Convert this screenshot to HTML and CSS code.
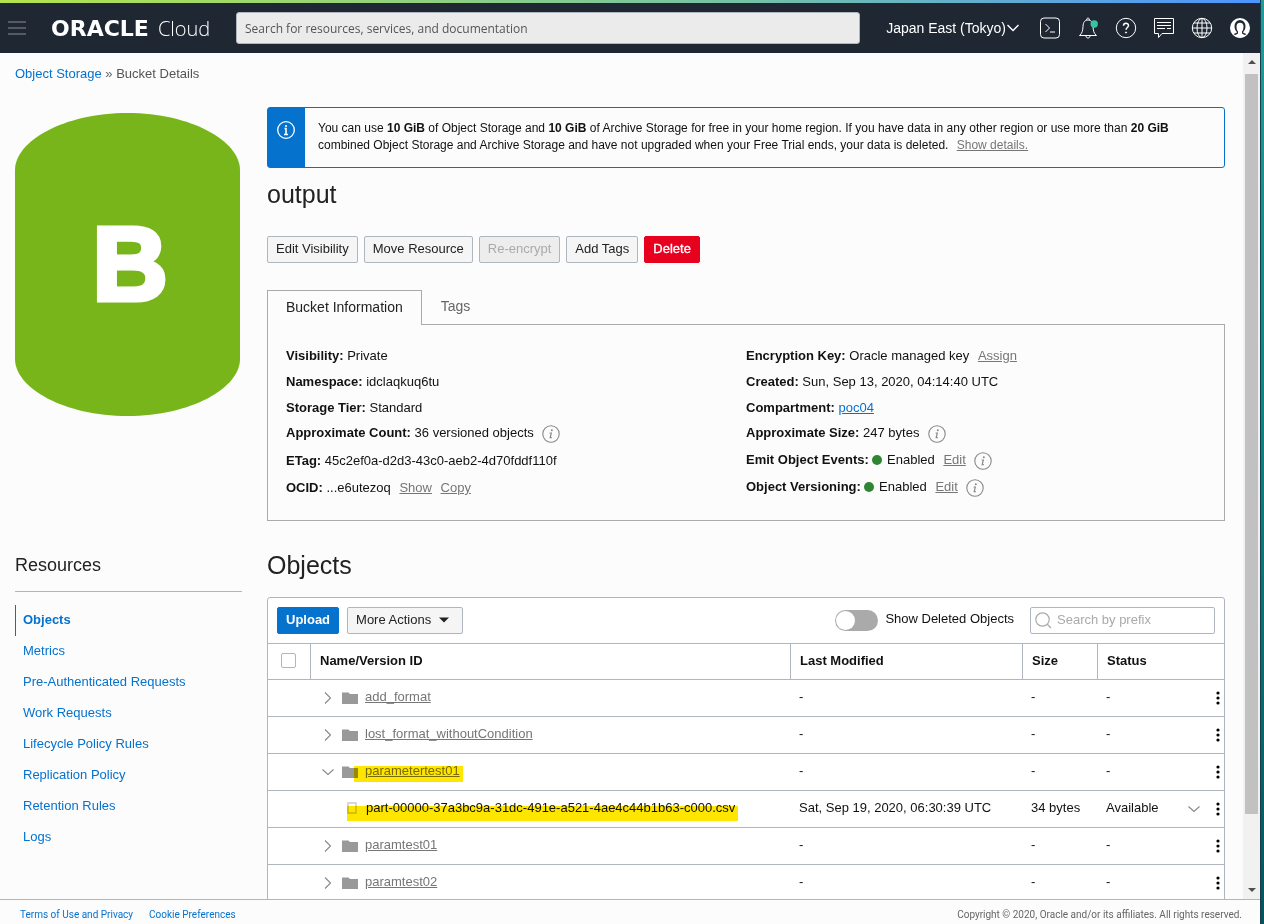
FILE: index.html
```html
<!DOCTYPE html>
<html lang="en">
<head>
    <meta charset="UTF-8">
    <meta name="viewport" content="width=device-width, initial-scale=1">
    <title>Bucket Details</title>
    <link rel="stylesheet" href="styles.css">
</head>
<body>

    <!-- shared icons -->
    <svg class="defs" aria-hidden="true">
        <symbol id="info" viewBox="0 0 18 18">
            <circle cx="9" cy="9" r="8.2" fill="none" stroke="currentColor" stroke-width="1.1"/>
            <circle cx="9.8" cy="5.2" r="1" fill="currentColor"/>
            <path d="M7.6 8h1.7L8.2 12.6h1.6" fill="none" stroke="currentColor" stroke-width="1.2"/>
        </symbol>
        <symbol id="right" viewBox="0 0 12 12">
            <path d="M3 0.5L8.5 6L3 11.5" fill="none" stroke="currentColor" stroke-width="1.1"/>
        </symbol>
        <symbol id="down" viewBox="0 0 12 12">
            <path d="M0.5 3.5L6 8.5L11.5 3.5" fill="none" stroke="currentColor" stroke-width="1.1"/>
        </symbol>
        <symbol id="folder" viewBox="0 0 16 12">
            <path d="M0 0.5h6.5l1.5 1.5h8v10H0z" fill="#999"/>
        </symbol>
        <symbol id="dots" viewBox="0 0 4 14">
            <circle cx="2" cy="2" r="1.6"/>
            <circle cx="2" cy="7" r="1.6"/>
            <circle cx="2" cy="12" r="1.6"/>
        </symbol>
    </svg>

    <div class="window">
        <header class="header">
            <button class="icon-btn menu" aria-label="Menu">
                <svg width="18" height="14" viewBox="0 0 18 14"><path d="M0 1h18M0 7h18M0 13h18" stroke="#8b9096" stroke-width="1.2"/></svg>
            </button>
            <a href="#" class="logo"><span class="logo-name">ORACLE</span><span class="logo-cloud">Cloud</span></a>
            <input type="text" class="search" aria-label="Search" placeholder="Search for resources, services, and documentation">
            <button class="region">Japan East (Tokyo)
                <svg width="12" height="8" viewBox="0 0 12 8"><path d="M0.5 1L6 6.5L11.5 1" fill="none" stroke="#fff" stroke-width="1.4"/></svg>
            </button>
            <div class="tools">
                <button class="icon-btn" aria-label="Cloud Shell">
                    <svg width="22" height="22" viewBox="0 0 22 22" fill="none" stroke="#fff"><rect x="1.5" y="1" width="19" height="20" rx="3.5"/><path d="M6.5 7l4 4-4 4M11 15h5"/></svg>
                </button>
                <button class="icon-btn" aria-label="Notifications">
                    <svg width="22" height="22" viewBox="0 0 22 22" fill="none" stroke="#fff"><path d="M2.5 18.5c3-2.500 3.200-5 3.500-9C6.200 5 8 3 11 3s4.800 2 5 6.500c.3 4 .5 6.500 3.500 9z"/><path d="M9.500 3c0-2.500 3-2.500 3 0M9 19c0 2.700 4 2.700 4 0"/><circle cx="17.200" cy="7" r="3.700" fill="#36c5a4" stroke="none"/></svg>
                </button>
                <button class="icon-btn" aria-label="Help">
                    <svg width="22" height="22" viewBox="0 0 22 22" fill="none" stroke="#fff"><circle cx="11" cy="11" r="9.700"/><path d="M8.500 8.800c0-3.400 5-3.300 5-.3 0 2-2.500 2-2.500 4.300" stroke-width="1.500"/><circle cx="11" cy="15.500" r=".6" fill="#fff"/></svg>
                </button>
                <button class="icon-btn" aria-label="Chat">
                    <svg width="22" height="22" viewBox="0 0 22 22" fill="none" stroke="#fff"><path d="M1.500 1.500h19v15H9l-3.500 4v-4h-4z"/><path d="M4 5.500h14M4 8.500h14M4 11.500h8m2 0h4"/></svg>
                </button>
                <button class="icon-btn" aria-label="Language">
                    <svg width="22" height="22" viewBox="0 0 22 22" fill="none" stroke="#fff"><circle cx="11" cy="11" r="9.700"/><ellipse cx="11" cy="11" rx="5" ry="9.700"/><path d="M11 1v20M1 11h20M3 6h16M3 16h16"/></svg>
                </button>
                <button class="icon-btn" aria-label="Profile">
                    <svg width="22" height="22" viewBox="0 0 22 22"><circle cx="11" cy="11" r="10" fill="#fff"/><path d="M5.500 9a5.500 6 0 0 1 11 0c0 2.800-1 4.500-2.200 5.700v1l3 1.300c-2.500 3-10 3-12.600 0l3-1.300v-1C6.500 13.500 5.500 11.800 5.500 9z" fill="#1f2733"/><path d="M7.500 9c0-4.500 7-4.500 7 0s-1.300 6-3.500 6-3.500-1.500-3.500-6z" fill="#fff"/><path d="M9 14h4v2.500l4 2.200c-3.500 2.500-8.500 2.500-12 0l4-2.200z" fill="#fff"/></svg>
                </button>
            </div>
        </header>

        <div class="body">
            <div class="page">
                <nav class="breadcrumb"><a href="#">Object Storage</a> » <span>Bucket Details</span></nav>

                <div class="layout">
                    <div class="bucket">
                        <svg viewBox="0 0 225 303" role="img" aria-label="Bucket">
                            <path d="M0 57C0 28 49 0 112.500 0S225 28 225 57V246C225 275 176 303 112.500 303S0 275 0 246z" fill="#78b51a"/>
                            <text x="115" y="187" class="bucket-letter">B</text>
                        </svg>
                    </div>

                    <main class="details">
                        <div class="alert">
                            <div class="alert-icon">
                                <svg width="18" height="18" viewBox="0 0 18 18" fill="none" stroke="#fff"><circle cx="9" cy="9" r="8.300" stroke-width="1.300"/><path d="M9 4v2M7.500 7.500H9v6M7 13.500h4" stroke-width="1.600"/></svg>
                            </div>
                            <p>You can use <b>10 GiB</b> of Object Storage and <b>10 GiB</b> of Archive Storage for free in your home region. If you have data in any other region or use more than <b>20 GiB</b> combined Object Storage and Archive Storage and have not upgraded when your Free Trial ends, your data is deleted. <a href="#" class="action">Show details.</a></p>
                        </div>

                        <h1>output</h1>

                        <div class="buttons">
                            <button class="btn">Edit Visibility</button>
                            <button class="btn">Move Resource</button>
                            <button class="btn" disabled>Re-encrypt</button>
                            <button class="btn">Add Tags</button>
                            <button class="btn btn-danger">Delete</button>
                        </div>

                        <div class="tabs" role="tablist">
                            <button class="tab active" role="tab" aria-selected="true">Bucket Information</button>
                            <button class="tab" role="tab" aria-selected="false">Tags</button>
                        </div>
                        <div class="info">
                            <div><b>Visibility:</b> Private</div>
                            <div><b>Encryption Key:</b> Oracle managed key <a href="#" class="action">Assign</a></div>
                            <div><b>Namespace:</b> idclaqkuq6tu</div>
                            <div><b>Created:</b> Sun, Sep 13, 2020, 04:14:40 UTC</div>
                            <div><b>Storage Tier:</b> Standard</div>
                            <div><b>Compartment:</b> <a href="#" class="link">poc04</a></div>
                            <div><b>Approximate Count:</b> 36 versioned objects <svg class="tip"><use href="#info"/></svg></div>
                            <div><b>Approximate Size:</b> 247 bytes <svg class="tip"><use href="#info"/></svg></div>
                            <div><b>ETag:</b> 45c2ef0a-d2d3-43c0-aeb2-4d70fddf110f</div>
                            <div><b>Emit Object Events:</b> <span class="dot"></span> Enabled <a href="#" class="action">Edit</a> <svg class="tip"><use href="#info"/></svg></div>
                            <div><b>OCID:</b> ...e6utezoq <a href="#" class="action">Show</a> <a href="#" class="action">Copy</a></div>
                            <div><b>Object Versioning:</b> <span class="dot"></span> Enabled <a href="#" class="action">Edit</a> <svg class="tip"><use href="#info"/></svg></div>
                        </div>
                    </main>

                    <aside class="resources">
                        <h2>Resources</h2>
                        <ul>
                            <li class="active"><a href="#">Objects</a></li>
                            <li><a href="#">Metrics</a></li>
                            <li><a href="#">Pre-Authenticated Requests</a></li>
                            <li><a href="#">Work Requests</a></li>
                            <li><a href="#">Lifecycle Policy Rules</a></li>
                            <li><a href="#">Replication Policy</a></li>
                            <li><a href="#">Retention Rules</a></li>
                            <li><a href="#">Logs</a></li>
                        </ul>
                    </aside>

                    <section class="objects">
                        <h2>Objects</h2>
                        <div class="panel">
                            <div class="toolbar">
                                <button class="btn btn-primary">Upload</button>
                                <button class="btn more" aria-haspopup="menu">More Actions
                                    <svg width="10" height="6" viewBox="0 0 10 6"><path d="M0 0.500h10L5 5.500z" fill="#222"/></svg>
                                </button>
                                <input type="checkbox" class="switch" id="deleted">
                                <label for="deleted">Show Deleted Objects</label>
                                <div class="prefix">
                                    <svg width="17" height="17" viewBox="0 0 17 17" fill="none" stroke="#aaa" stroke-width="1.200"><circle cx="7.500" cy="7.500" r="6.700"/><path d="M12.500 12.500l3.500 3.500"/></svg>
                                    <input type="text" aria-label="Search by prefix" placeholder="Search by prefix">
                                </div>
                            </div>
                            <table>
                                <colgroup>
                                    <col class="c-check"><col><col class="c-date"><col class="c-size"><col class="c-status">
                                </colgroup>
                                <thead>
                                    <tr>
                                        <th class="check"><input type="checkbox" aria-label="Select all"></th>
                                        <th>Name/Version ID</th>
                                        <th>Last Modified</th>
                                        <th>Size</th>
                                        <th>Status</th>
                                    </tr>
                                </thead>
                                <tbody>
                                    <tr>
                                        <td></td>
                                        <td><div class="name"><svg class="arrow"><use href="#right"/></svg><svg class="folder"><use href="#folder"/></svg><a href="#">add_format</a></div></td>
                                        <td>-</td>
                                        <td>-</td>
                                        <td><div class="status">-<button class="kebab" aria-label="Actions"><svg><use href="#dots"/></svg></button></div></td>
                                    </tr>
                                    <tr>
                                        <td></td>
                                        <td><div class="name"><svg class="arrow"><use href="#right"/></svg><svg class="folder"><use href="#folder"/></svg><a href="#">lost_format_withoutCondition</a></div></td>
                                        <td>-</td>
                                        <td>-</td>
                                        <td><div class="status">-<button class="kebab" aria-label="Actions"><svg><use href="#dots"/></svg></button></div></td>
                                    </tr>
                                    <tr>
                                        <td></td>
                                        <td><div class="name"><svg class="arrow"><use href="#down"/></svg><svg class="folder"><use href="#folder"/></svg><a href="#" class="marked">parametertest01</a></div></td>
                                        <td>-</td>
                                        <td>-</td>
                                        <td><div class="status">-<button class="kebab" aria-label="Actions"><svg><use href="#dots"/></svg></button></div></td>
                                    </tr>
                                    <tr>
                                        <td></td>
                                        <td><div class="name file"><svg class="doc" viewBox="0 0 10 12"><rect x="1" y="1" width="8" height="10" fill="none" stroke="#ccc" stroke-width="1.500"/></svg><span class="marked">part-00000-37a3bc9a-31dc-491e-a521-4ae4c44b1b63-c000.csv</span></div></td>
                                        <td>Sat, Sep 19, 2020, 06:30:39 UTC</td>
                                        <td>34 bytes</td>
                                        <td><div class="status">Available<button class="kebab expand" aria-label="Expand"><svg><use href="#down"/></svg></button><button class="kebab" aria-label="Actions"><svg><use href="#dots"/></svg></button></div></td>
                                    </tr>
                                    <tr>
                                        <td></td>
                                        <td><div class="name"><svg class="arrow"><use href="#right"/></svg><svg class="folder"><use href="#folder"/></svg><a href="#">paramtest01</a></div></td>
                                        <td>-</td>
                                        <td>-</td>
                                        <td><div class="status">-<button class="kebab" aria-label="Actions"><svg><use href="#dots"/></svg></button></div></td>
                                    </tr>
                                    <tr>
                                        <td></td>
                                        <td><div class="name"><svg class="arrow"><use href="#right"/></svg><svg class="folder"><use href="#folder"/></svg><a href="#">paramtest02</a></div></td>
                                        <td>-</td>
                                        <td>-</td>
                                        <td><div class="status">-<button class="kebab" aria-label="Actions"><svg><use href="#dots"/></svg></button></div></td>
                                    </tr>
                                </tbody>
                            </table>
                        </div>
                    </section>
                </div>
            </div>

            <div class="scrollbar" aria-hidden="true">
                <svg width="8" height="4" viewBox="0 0 8 4"><path d="M0 4L4 0l4 4z" fill="#505050"/></svg>
                <div class="track"><div class="thumb"></div></div>
                <svg width="8" height="4" viewBox="0 0 8 4"><path d="M0 0l4 4 4-4z" fill="#505050"/></svg>
            </div>
        </div>

        <footer class="footer">
            <a href="#">Terms of Use and Privacy</a>
            <a href="#">Cookie Preferences</a>
            <span>Copyright © 2020, Oracle and/or its affiliates. All rights reserved.</span>
        </footer>
    </div>
    <div class="desktop"></div>

</body>
</html>
```
FILE: styles.css
```css
* {
    box-sizing: border-box;
}

body {
    margin: 0;
    display: flex;
    height: 100vh;
    overflow: hidden;
    font-family: "Liberation Sans", Arial, sans-serif;
    font-size: 13px;
    line-height: 17px;
    color: #111;
    background-color: #fcfcfc;
}

a {
    color: #0572ce;
    text-decoration: none;
}

button,
input {
    font: inherit;
}

h1,
h2,
p,
ul {
    margin: 0;
    padding: 0;
    font-weight: normal;
}

.defs {
    position: absolute;
    width: 0;
    height: 0;
}

.window {
    flex: 1;
    min-width: 0;
    display: flex;
    flex-direction: column;
}

/* strip of the desktop behind the window */
.desktop {
    width: 4px;
    border-left: 1px solid #14404a;
    background: linear-gradient(#1f9c9c, #0b8588 45%, #04535f);
}

/* header */
.header {
    flex: none;
    height: 53px;
    display: flex;
    align-items: center;
    padding: 0 9px 0 8px;
    border-top: 3px solid;
    border-image: linear-gradient(to right, #b4e34d, #74c1a8 60%, #4d94ff) 1;
    background-color: #1f2733;
    color: white;
}

.icon-btn {
    display: flex;
    padding: 0;
    border: none;
    background: none;
    cursor: pointer;
}

.logo {
    display: flex;
    align-items: center;
    gap: 9px;
    width: 185px;
    margin-left: 25px;
    color: white;
}

.logo-name {
    font-family: "DejaVu Sans", sans-serif;
    font-weight: bold;
    font-size: 22px;
}

.logo-cloud {
    font-family: "Open Sans", sans-serif;
    font-weight: 300;
    font-size: 20px;
}

.search {
    flex: 1;
    min-width: 0;
    height: 32px;
    padding: 0 8px;
    border: 1px solid #b0b6bf;
    border-radius: 3px;
    background-color: #ebebeb;
    font-family: "Open Sans", sans-serif;
    font-size: 12px;
}

.search::placeholder {
    color: #555;
}

.region {
    display: flex;
    align-items: center;
    gap: 1px;
    margin: 0 20px 0 26px;
    padding: 0;
    border: none;
    background: none;
    color: white;
    font-size: 14px;
    white-space: nowrap;
}

.tools {
    display: flex;
    gap: 16px;
}

/* page */
.body {
    flex: 1;
    min-height: 0;
    display: flex;
}

.page {
    flex: 1;
    min-width: 0;
    padding: 12px 18px 0 15px;
    overflow: hidden;
}

.breadcrumb {
    color: #666;
}

.breadcrumb span {
    color: #555;
}

.layout {
    display: grid;
    grid-template-columns: 227px minmax(0, 1fr);
    column-gap: 25px;
    margin-top: 25px;
}

.bucket svg {
    display: block;
    width: 225px;
    margin-top: 6px;
}

.bucket-letter {
    font-size: 104px;
    font-weight: bold;
    fill: white;
    stroke: white;
    stroke-width: 5px;
    text-anchor: middle;
}

.alert {
    display: flex;
    border: 1px solid #0572ce;
    border-radius: 3px;
}

.alert-icon {
    flex: none;
    width: 37px;
    padding: 13px 0 0 9px;
    background-color: #0572ce;
}

.alert p {
    padding: 12px 12px 13px 13px;
    font-size: 12px;
}

.alert b {
    white-space: nowrap;
}

.action {
    margin-left: 5px;
    color: #767676;
    text-decoration: underline;
}

.link {
    text-decoration: underline;
}

h1,
.objects h2 {
    font-size: 25px;
    line-height: 30px;
    color: #222;
}

h1 {
    margin-top: 11px;
}

.buttons {
    display: flex;
    gap: 6px;
    margin-top: 27px;
}

.btn {
    height: 27px;
    padding: 0 8px 2px;
    border: 1px solid #b0b6bf;
    border-radius: 2px;
    background-color: #f5f5f5;
    color: #222;
    cursor: pointer;
}

.btn:disabled {
    background-color: #ededed;
    color: #aaa;
}

.btn-danger {
    border-color: #e8001f;
    background-color: #e8001f;
    color: white;
    -webkit-text-stroke: 0.3px white;
}

.btn-primary {
    border-color: #0572ce;
    background-color: #0572ce;
    color: white;
    font-weight: bold;
}

.tabs {
    display: flex;
    margin-top: 27px;
}

.tab {
    height: 34px;
    padding: 0 19px 2px;
    border: none;
    background: none;
    color: #666;
    font-size: 14px;
}

/* covers the top border of the panel */
.tab.active {
    height: 35px;
    margin-bottom: -1px;
    padding: 0 18px 2px;
    border: 1px solid #aaa;
    border-bottom: none;
    background-color: #fcfcfc;
    color: #222;
    position: relative;
}

.info {
    display: grid;
    grid-template-columns: 1fr 1fr;
    grid-template-rows: repeat(3, 26px) repeat(3, 27px);
    align-items: center;
    padding: 17px 18px 19px;
    border: 1px solid #aaa;
}

.tip {
    width: 18px;
    height: 18px;
    margin-left: 5px;
    color: #888;
    vertical-align: middle;
}

.dot {
    display: inline-block;
    width: 10px;
    height: 10px;
    margin: -2px 1px 0 0;
    border-radius: 50%;
    background-color: #2e8533;
    vertical-align: middle;
}

/* resources menu */
.resources,
.objects {
    margin-top: 29px;
}

.resources h2 {
    padding-bottom: 11px;
    border-bottom: 1px solid #b0b6bf;
    font-size: 18px;
    line-height: 30px;
    color: #222;
}

.resources ul {
    margin-top: 13px;
    list-style: none;
}

.resources li {
    height: 31px;
    padding: 6px 8px;
}

.resources .active {
    padding-left: 7px;
    border-left: 1px solid #0572ce;
    font-weight: bold;
}

/* objects table */
.panel {
    margin-top: 17px;
    border: 1px solid #b0b6bf;
    border-radius: 3px;
    background-color: white;
}

.toolbar {
    display: flex;
    align-items: center;
    height: 45px;
    padding: 0 9px;
}

.more {
    display: flex;
    align-items: center;
    gap: 8px;
    margin-left: 8px;
    padding-right: 13px;
}

.switch {
    appearance: none;
    width: 43px;
    height: 21px;
    margin: 0 7px 0 auto;
    padding: 1px;
    border-radius: 11px;
    background-color: #aaa;
}

.switch::before {
    content: "";
    display: block;
    width: 19px;
    height: 19px;
    border-radius: 50%;
    background-color: white;
}

.switch:checked {
    background-color: #0572ce;
}

.switch:checked::before {
    margin-left: auto;
}

.toolbar label {
    padding-bottom: 4px;
}

.prefix {
    display: flex;
    align-items: center;
    width: 185px;
    height: 27px;
    margin-left: 16px;
    padding: 0 4px;
    border: 1px solid #b0b6bf;
    border-radius: 2px;
}

.prefix input {
    flex: 1;
    min-width: 0;
    padding: 0 0 2px 5px;
    border: none;
    outline: none;
    background: none;
}

.prefix input::placeholder {
    color: #aaa;
}

table {
    width: 100%;
    table-layout: fixed;
    border-spacing: 0;
}

.c-check {
    width: 42px;
}

.c-date {
    width: 232px;
}

.c-size {
    width: 75px;
}

.c-status {
    width: 127px;
}

th {
    height: 37px;
    padding: 0 9px 2px;
    border-top: 1px solid #b0b6bf;
    border-bottom: 1px solid #b0b6bf;
    border-left: 1px solid #b0b6bf;
    text-align: left;
}

th.check {
    padding: 0 13px 2px;
    border-left: none;
}

.check input {
    appearance: none;
    display: block;
    width: 15px;
    height: 15px;
    margin: 0;
    border: 1px solid #b0b6bf;
    border-radius: 2px;
    background-color: white;
}

td {
    height: 37px;
    padding: 0 0 3px 9px;
    border-bottom: 1px solid #b0b6bf;
}

.name,
.status {
    display: flex;
    align-items: center;
}

.name a {
    color: #767676;
    text-decoration: underline;
}

.arrow {
    width: 12px;
    height: 12px;
    margin: 3px 8px 0 3px;
    color: #888;
}

.folder {
    width: 16px;
    height: 12px;
    margin: 3px 7px 0 0;
}

.file {
    padding-left: 28px;
}

.doc {
    width: 10px;
    height: 12px;
    margin-right: 9px;
}

/* highlighter pen over the name */
.marked {
    position: relative;
}

.marked::after {
    content: "";
    position: absolute;
    top: 4px;
    right: -3px;
    bottom: -3px;
    left: -11px;
    background-color: #ffe600;
    mix-blend-mode: multiply;
}

.file .marked::after {
    top: 7px;
    bottom: -5px;
    left: -19px;
}

.kebab {
    display: flex;
    margin: 3px 4px 0 auto;
    padding: 0;
    border: none;
    background: none;
}

.kebab svg {
    width: 4px;
    height: 14px;
}

.kebab + .kebab {
    margin-left: 16px;
}

.expand {
    margin-right: 0;
    color: #888;
}

.expand svg {
    width: 12px;
}

/* scrollbar */
.scrollbar {
    flex: none;
    width: 17px;
    display: flex;
    flex-direction: column;
    align-items: center;
    padding: 7px 0;
    background-color: #f1f1f1;
}

.track {
    flex: 1;
    width: 13px;
    margin: 10px 0;
}

.thumb {
    height: 92%;
    background-color: #c1c1c1;
}

/* footer */
.footer {
    flex: none;
    display: flex;
    gap: 16px;
    height: 25px;
    padding: 6px 18px 0 20px;
    border-top: 1px solid #b0b6bf;
    font-family: Roboto, sans-serif;
    font-size: 10px;
    color: #666;
}

.footer span {
    margin-left: auto;
}
```
